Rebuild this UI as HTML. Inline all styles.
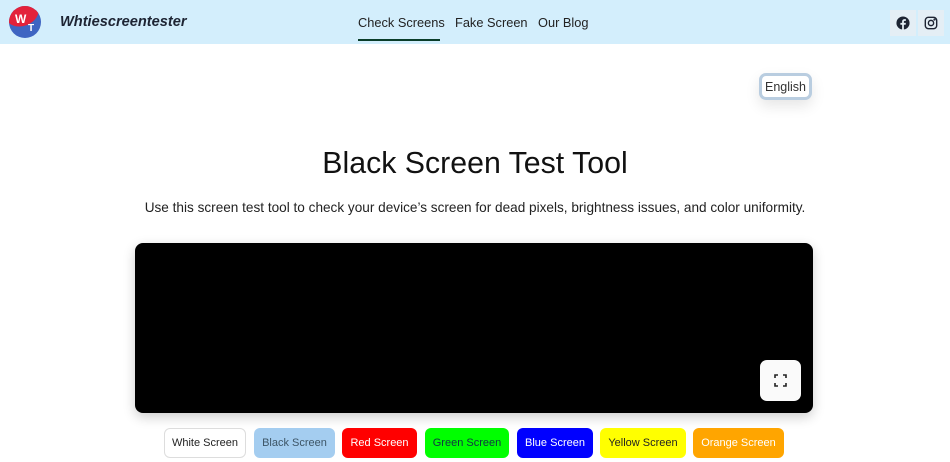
<!DOCTYPE html>
<html><head><meta charset="utf-8"><style>
*{box-sizing:border-box;margin:0;padding:0}
body{width:950px;height:462px;overflow:hidden;background:#fff;font-family:"Liberation Sans",Arial,sans-serif;position:relative}
.hdr{position:absolute;left:0;top:0;width:950px;height:44px;background:#d3eefc}
.logo{position:absolute;left:9px;top:6px;width:32px;height:32px;border-radius:50%;overflow:hidden;background:#3f65c2}
.brand{position:absolute;left:60px;top:14px;font-size:14.6px;font-weight:bold;font-style:italic;color:#1d2433}
.nav{position:absolute;top:15px;font-size:12.8px;color:#222;white-space:nowrap}
.ul{position:absolute;left:358px;top:39px;width:82px;height:2px;background:#0a3d2a}
.ib{position:absolute;top:10px;width:26px;height:26px;background:#e4eef5;display:flex;align-items:center;justify-content:center}
.lang{position:absolute;left:759px;top:73px;width:53px;height:27px;border:3px solid #b9cde0;border-radius:7px;font-size:12.5px;color:#333;display:flex;align-items:center;justify-content:center;background:#fff;box-shadow:0 6px 14px rgba(0,0,0,.1)}
h1{position:absolute;left:0;width:950px;top:147px;text-align:center;font-size:30.3px;font-weight:normal;color:#111}
.sub{position:absolute;left:0;width:950px;top:200px;text-align:center;font-size:13.6px;color:#222}
.scr{position:absolute;left:135px;top:243px;width:678px;height:170px;background:#000;border-radius:8px;box-shadow:0 4px 12px rgba(0,0,0,.2)}
.fs{position:absolute;left:760px;top:360px;width:41px;height:41px;background:#fafafa;border-radius:7px}
.b{position:absolute;top:428px;height:30px;border-radius:6px;font-size:11px;display:flex;align-items:center;justify-content:center}
</style></head><body>
<div class="hdr"></div>
<div class="logo"><div style="position:absolute;left:-4px;top:-6px;width:34px;height:26px;background:#e3223b;border-radius:50%;transform:rotate(-20deg)"></div><span style="position:absolute;left:6px;top:6px;color:#fff;font-weight:bold;font-size:12px">W</span><span style="position:absolute;left:19px;top:17px;color:#fff;font-weight:bold;font-size:10px">T</span></div>
<div class="brand">Whtiescreentester</div>
<div class="nav" style="left:358px">Check Screens</div>
<div class="ul"></div>
<div class="nav" style="left:455px">Fake Screen</div>
<div class="nav" style="left:538px">Our Blog</div>
<div class="ib" style="left:890px"><svg width="14" height="14" viewBox="0 0 16 16"><circle cx="8" cy="8" r="7.5" fill="#1d2433"/><path d="M9 16V10h2l.3-2.2H9V6.5c0-.6.2-1 1-1h1.3V3.6C11 3.5 10.4 3.5 9.8 3.5 8.3 3.5 7 4.4 7 6.2v1.6H5V10h2v6z" fill="#e4eef5"/></svg></div>
<div class="ib" style="left:918px"><svg width="14" height="14" viewBox="0 0 16 16" fill="none" stroke="#1d2433" stroke-width="1.6"><rect x="1.5" y="1.5" width="13" height="13" rx="3.5"/><circle cx="8" cy="8" r="3"/><circle cx="12" cy="4" r=".5" fill="#1d2433"/></svg></div>
<div class="lang">English</div>
<h1>Black Screen Test Tool</h1>
<div class="sub">Use this screen test tool to check your device’s screen for dead pixels, brightness issues, and color uniformity.</div>
<div class="scr"></div>
<div class="fs"><svg style="position:absolute;left:14px;top:14px" width="13" height="13" viewBox="0 0 13 13" fill="none" stroke="#222" stroke-width="1.6"><path d="M1 4V1h3M9 1h3v3M12 9v3H9M4 12H1V9"/></svg></div>
<div class="b" style="left:164px;width:82px;border:1px solid #ddd;color:#222;background:#fff">White Screen</div>
<div class="b" style="left:254px;width:81px;background:#a4cdf0;color:#3d5566">Black Screen</div>
<div class="b" style="left:342px;width:75px;background:#ff0000;color:#fff">Red Screen</div>
<div class="b" style="left:425px;width:84px;background:#00ff00;color:#134">Green Screen</div>
<div class="b" style="left:517px;width:76px;background:#0000ff;color:#fff">Blue Screen</div>
<div class="b" style="left:600px;width:86px;background:#ffff00;color:#222">Yellow Screen</div>
<div class="b" style="left:693px;width:91px;background:#ffa500;color:#fff">Orange Screen</div>
</body></html>
